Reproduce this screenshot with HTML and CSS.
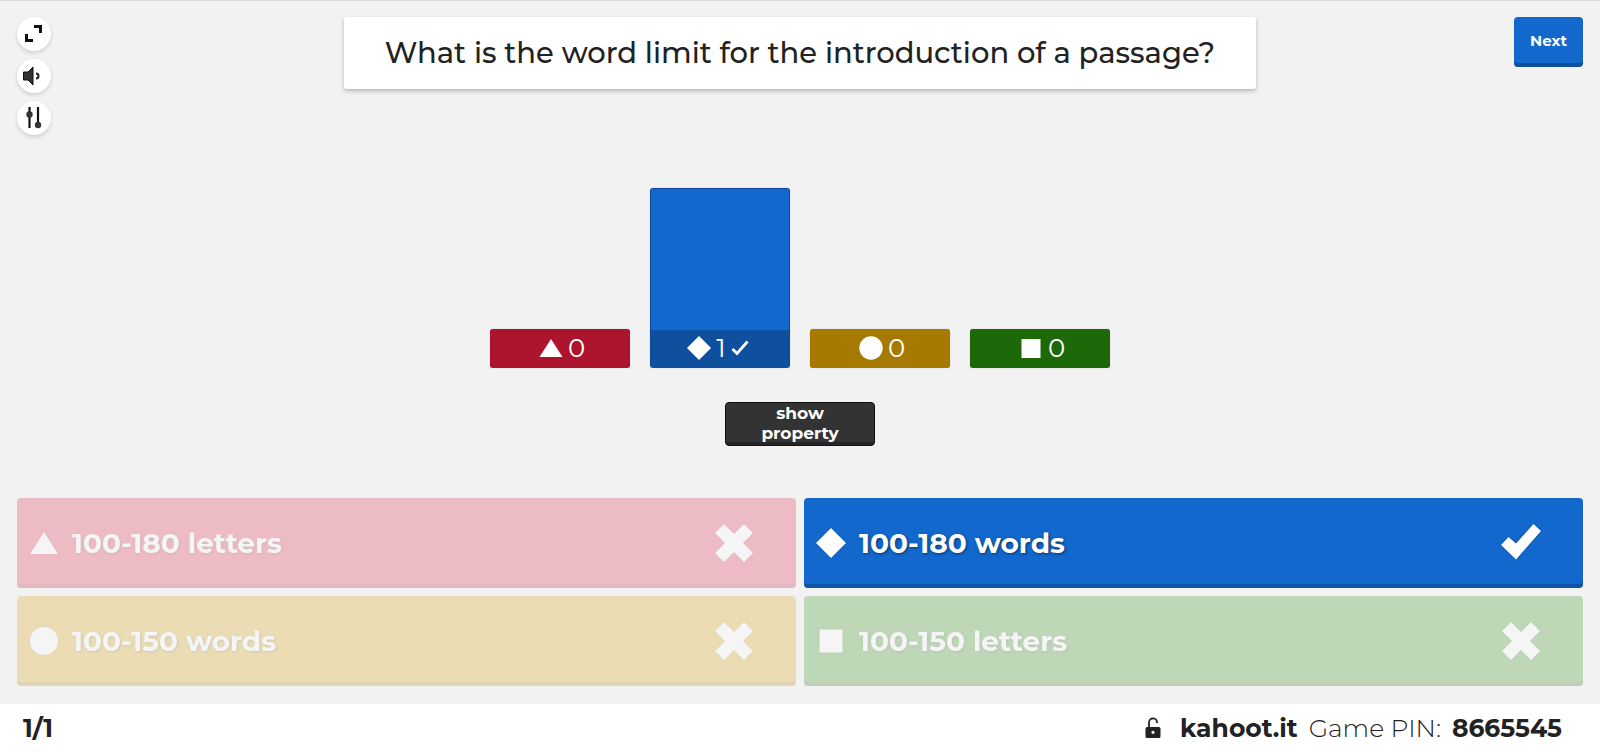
FILE: index.html
```html
<!DOCTYPE html>
<html lang="en">
<head>
    <meta charset="UTF-8">
    <meta name="viewport" content="width=device-width, initial-scale=1.0">
    <title>Kahoot!</title>
    <link rel="stylesheet" href="styles.css">
</head>
<body>
    <header class="header">
        <div class="controls">
            <button type="button" class="round-button" aria-label="Fullscreen">
                <svg width="34" height="34" viewBox="0 0 34 34" fill="#111"><path d="M17 8h8v8h-3v-5h-5zM8 17h3v5h5v3H8z"/></svg>
            </button>
            <button type="button" class="round-button" aria-label="Volume">
                <svg width="34" height="34" viewBox="0 0 34 34"><path d="M6.500 13h4.500l5-5v18l-5-5H6.500z" fill="#333" stroke="#111"/><path d="M19 14.500a2.300 2.300 0 0 1 0 5" fill="none" stroke="#222" stroke-width="2"/></svg>
            </button>
            <button type="button" class="round-button" aria-label="Settings">
                <svg width="34" height="34" viewBox="0 0 34 34" fill="#333"><path d="M12.500 6v21M21 6v19" stroke="#111" stroke-width="2.200"/><circle cx="12.500" cy="13.500" r="3.200"/><circle cx="21" cy="24" r="3.200"/></svg>
            </button>
        </div>
        <h1 class="question">What is the word limit for the introduction of a passage?</h1>
        <button type="button" class="next">Next</button>
    </header>

    <main class="results">
        <div class="chart">
            <div class="bar red">
                <div class="bar-label">
                    <svg width="24" height="24" viewBox="0 0 24 24" fill="#fff"><path d="M12 3l11.500 18H.500z"/></svg>
                    <span>0</span>
                </div>
            </div>
            <div class="bar blue">
                <div class="bar-fill"></div>
                <div class="bar-label">
                    <svg width="24" height="24" viewBox="0 0 24 24" fill="#fff"><path d="M12 0l12 12-12 12L0 12z"/></svg>
                    <span>1</span>
                    <svg class="bar-tick" width="18" height="16" viewBox="0 0 18 16"><path d="M1.500 9l4.500 4.500L16.500 1.500" fill="none" stroke="#fff" stroke-width="2.800"/></svg>
                </div>
            </div>
            <div class="bar yellow">
                <div class="bar-label">
                    <svg width="24" height="24" viewBox="0 0 24 24" fill="#fff"><circle cx="12" cy="12" r="11.700"/></svg>
                    <span>0</span>
                </div>
            </div>
            <div class="bar green">
                <div class="bar-label">
                    <svg width="24" height="24" viewBox="0 0 24 24" fill="#fff"><path d="M2.500 3h19v19h-19z"/></svg>
                    <span>0</span>
                </div>
            </div>
        </div>
        <button type="button" class="show-button">show<br>property</button>
    </main>

    <ul class="answers">
        <li class="answer red wrong">
            <svg width="32" height="32" viewBox="0 0 32 32" fill="#fff"><path d="M16 5l14 22H2z"/></svg>
            <span class="answer-text">100-180 letters</span>
            <svg width="40" height="40" viewBox="0 0 40 40" fill="#fff"><path d="M10 1l10 10L30 1l9 9-10 10 10 10-9 9-10-10-10 10-9-9 10-10L1 10z"/></svg>
        </li>
        <li class="answer blue">
            <svg width="32" height="32" viewBox="0 0 32 32" fill="#fff"><path d="M16 1l15 15-15 15L1 16z"/></svg>
            <span class="answer-text">100-180 words</span>
            <svg width="40" height="40" viewBox="0 0 40 40" fill="#fff"><path d="M0 22l7.500-8 7.500 6.500L32.500 1l7.500 7-25 28.500z"/></svg>
        </li>
        <li class="answer yellow wrong">
            <svg width="32" height="32" viewBox="0 0 32 32" fill="#fff"><circle cx="16" cy="16" r="14"/></svg>
            <span class="answer-text">100-150 words</span>
            <svg width="40" height="40" viewBox="0 0 40 40" fill="#fff"><path d="M10 1l10 10L30 1l9 9-10 10 10 10-9 9-10-10-10 10-9-9 10-10L1 10z"/></svg>
        </li>
        <li class="answer green wrong">
            <svg width="32" height="32" viewBox="0 0 32 32" fill="#fff"><path d="M4.500 4.500h23v23h-23z"/></svg>
            <span class="answer-text">100-150 letters</span>
            <svg width="40" height="40" viewBox="0 0 40 40" fill="#fff"><path d="M10 1l10 10L30 1l9 9-10 10 10 10-9 9-10-10-10 10-9-9 10-10L1 10z"/></svg>
        </li>
    </ul>

    <footer class="footer">
        <strong>1/1</strong>
        <div class="game-info">
            <svg class="lock" width="16" height="22" viewBox="0 0 16 22"><path d="M4 10V6a4 4 0 0 1 8-1v1" fill="none" stroke="#222" stroke-width="1.800"/><path fill="#222" fill-rule="evenodd" d="M2 10h12a1.500 1.500 0 0 1 1.500 1.500v8a1.500 1.500 0 0 1-1.500 1.500H2a1.500 1.500 0 0 1-1.500-1.500v-8A1.500 1.500 0 0 1 2 10zm6 3.700a1.600 1.600 0 1 0 0 3.200 1.600 1.600 0 0 0 0-3.200z"/></svg>
            <strong>kahoot.it</strong>
            <span class="pin-label">Game PIN:</span>
            <strong>8665545</strong>
        </div>
    </footer>
</body>
</html>
```
FILE: styles.css
```css
* {
    box-sizing: border-box;
}

body {
    font-family: Montserrat, Inter, sans-serif;
    background-color: #f2f2f2;
    color: #222;
    margin: 0;
    min-height: 100vh;
    display: flex;
    flex-direction: column;
    border-top: 1px solid #ddd;
}

button {
    font-family: inherit;
    border: none;
    padding: 0;
    cursor: pointer;
}

/* Header */
.header {
    display: grid;
    grid-template-columns: 1fr 57vw 1fr;
    align-items: start;
    padding: 16px 17px 0;
}

.controls {
    display: flex;
    flex-direction: column;
    gap: 8px;
}

.round-button {
    width: 34px;
    height: 34px;
    border-radius: 50%;
    background-color: #fff;
    box-shadow: 0 2px 4px rgba(0, 0, 0, 0.15);
}

.round-button svg {
    display: block;
}

.question {
    margin: 0;
    padding: 16px;
    background-color: #fff;
    border-radius: 3px;
    box-shadow: 0 2px 4px rgba(0, 0, 0, 0.25);
    font-size: 29px;
    font-weight: 500;
    line-height: 40px;
    text-align: center;
}

.next {
    justify-self: end;
    width: 69px;
    height: 50px;
    padding-bottom: 4px;
    border-radius: 4px;
    background-color: #1368ce;
    box-shadow: inset 0 -4px rgba(0, 0, 0, 0.25);
    color: #fff;
    font-size: 15px;
    font-weight: 700;
}

/* Colors */
.red {
    background-color: #e21b3c;
}

.blue {
    background-color: #1368ce;
}

.yellow {
    background-color: #d89e00;
}

.green {
    background-color: #26890c;
}

/* Chart */
.results {
    flex: 1;
    display: flex;
    flex-direction: column;
    align-items: center;
    justify-content: center;
    gap: 34px;
}

.chart {
    display: flex;
    align-items: flex-end;
    gap: 20px;
}

.bar {
    width: 140px;
    border-radius: 3px;
    overflow: hidden;
    box-shadow: 0 0 1px rgba(0, 0, 0, 0.4);
}

.bar.blue {
    border: 1px solid #0d4ba0;
}

.bar-fill {
    height: 141px;
}

.bar-label {
    display: flex;
    align-items: center;
    justify-content: center;
    gap: 5px;
    height: 39px;
    padding-left: 4px;
    background-color: rgba(0, 0, 0, 0.23);
    color: #fff;
    font-size: 26px;
    font-weight: 400;
}

.blue .bar-label {
    height: 37px;
}

.bar-tick {
    margin-right: 8px;
}

.show-button {
    width: 150px;
    height: 44px;
    padding-bottom: 6px;
    border: 1px solid #111;
    border-radius: 4px;
    background-color: #333;
    box-shadow: inset 0 -3px rgba(0, 0, 0, 0.25);
    color: #fff;
    font-size: 17px;
    font-weight: 700;
    line-height: 20px;
}

/* Answers */
.answers {
    display: grid;
    grid-template-columns: 1fr 1fr;
    gap: 8px;
    margin: 0;
    padding: 0 17px 18px;
    list-style: none;
}

.answer {
    display: flex;
    align-items: center;
    gap: 12px;
    height: 90px;
    padding: 0 42px 0 11px;
    border-radius: 4px;
    box-shadow: inset 0 -4px rgba(0, 0, 0, 0.2);
    color: #fff;
    font-size: 28px;
    font-weight: 700;
}

.answer svg {
    filter: drop-shadow(0 0 1px rgba(0, 0, 0, 0.3));
}

.answer-text {
    flex: 1;
    text-shadow: 1px 1px 3px rgba(0, 0, 0, 0.5);
}

.wrong {
    opacity: 0.25;
}

/* Footer */
.footer {
    display: flex;
    align-items: center;
    justify-content: space-between;
    height: 48px;
    padding: 0 38px 0 23px;
    background-color: #fff;
    font-size: 25px;
}

.footer strong {
    font-weight: 700;
}

.game-info {
    display: flex;
    align-items: center;
    gap: 11px;
}

.lock {
    margin-right: 8px;
}

.pin-label {
    font-weight: 300;
}
```
